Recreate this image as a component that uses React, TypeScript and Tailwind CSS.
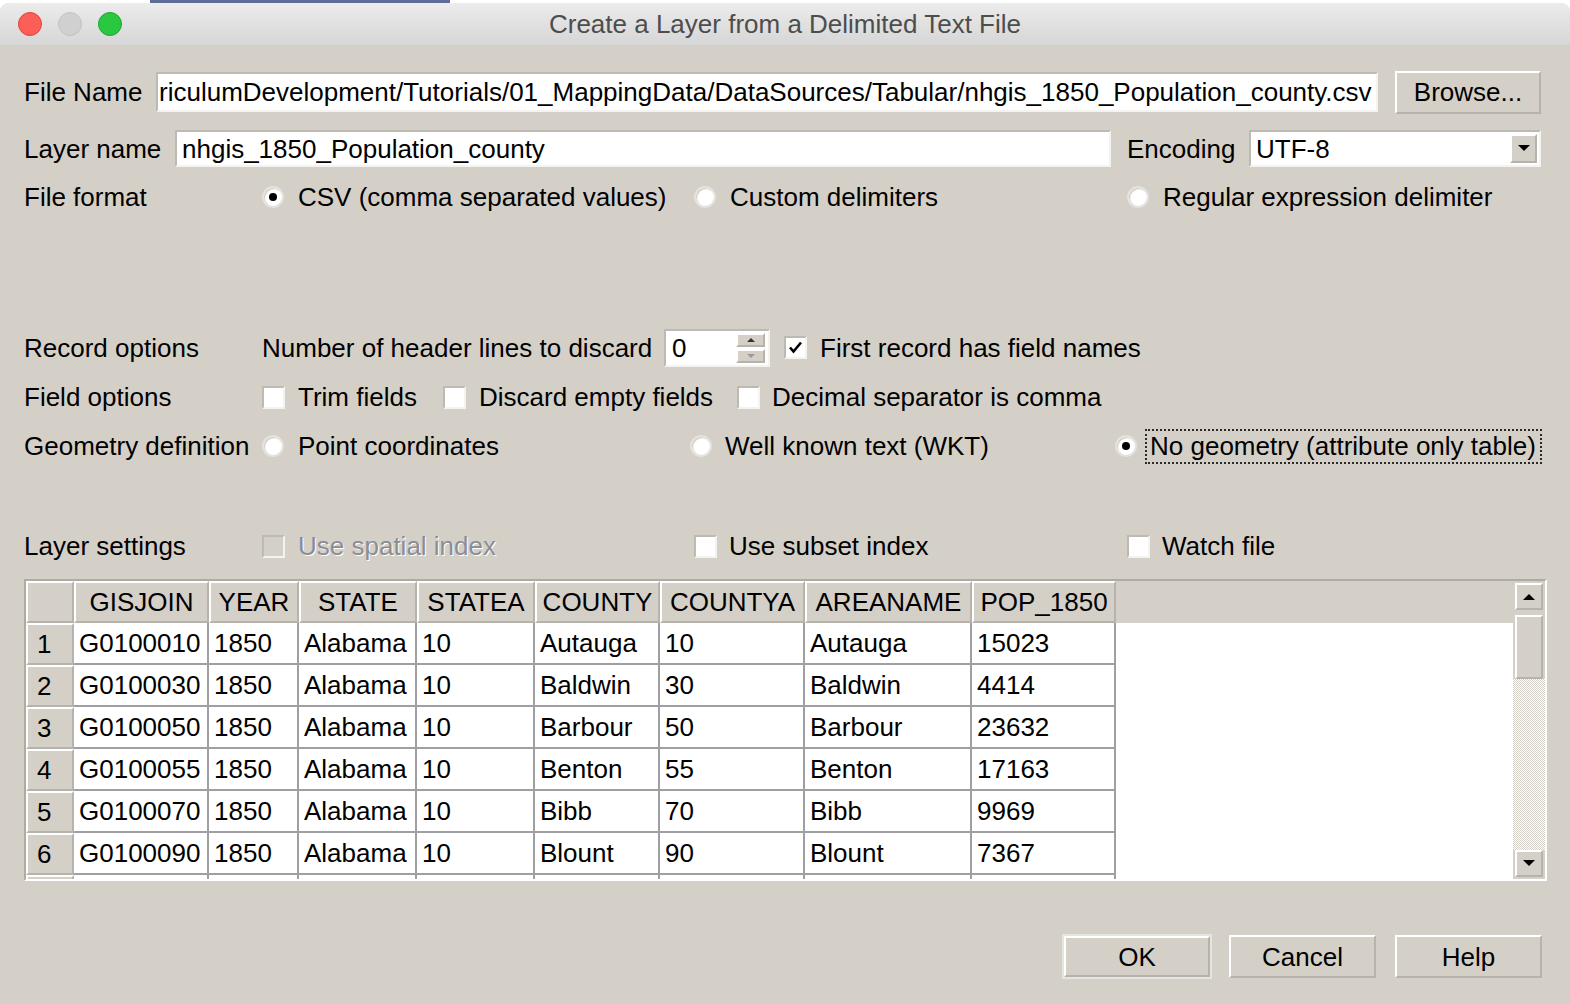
import React from 'react';

const sunken =
  'border-2 border-t-[#bdbab3] border-l-[#bdbab3] border-b-[#f4f3f0] border-r-[#f4f3f0]';
const raised =
  'border-2 border-t-white border-l-white border-b-[#b6b3ac] border-r-[#b6b3ac]';

const columns = [
  { name: 'GISJOIN', w: 'w-[135px]' },
  { name: 'YEAR', w: 'w-[90px]' },
  { name: 'STATE', w: 'w-[118px]' },
  { name: 'STATEA', w: 'w-[118px]' },
  { name: 'COUNTY', w: 'w-[125px]' },
  { name: 'COUNTYA', w: 'w-[145px]' },
  { name: 'AREANAME', w: 'w-[167px]' },
  { name: 'POP_1850', w: 'w-[144px]' },
];

const rows = [
  ['G0100010', '1850', 'Alabama', '10', 'Autauga', '10', 'Autauga', '15023'],
  ['G0100030', '1850', 'Alabama', '10', 'Baldwin', '30', 'Baldwin', '4414'],
  ['G0100050', '1850', 'Alabama', '10', 'Barbour', '50', 'Barbour', '23632'],
  ['G0100055', '1850', 'Alabama', '10', 'Benton', '55', 'Benton', '17163'],
  ['G0100070', '1850', 'Alabama', '10', 'Bibb', '70', 'Bibb', '9969'],
  ['G0100090', '1850', 'Alabama', '10', 'Blount', '90', 'Blount', '7367'],
];

function Radio({ checked = false }: { checked?: boolean }) {
  return (
    <div className="w-[22px] h-[22px] shrink-0 rounded-full bg-white border-2 border-[#e4e2de] shadow-[inset_1px_1px_1px_#c9c6c0] flex items-center justify-center">
      {checked && <div className="w-[8px] h-[8px] rounded-full bg-black" />}
    </div>
  );
}

function Check({ checked = false, disabled = false }: { checked?: boolean; disabled?: boolean }) {
  return (
    <div
      className={`w-[23px] h-[23px] shrink-0 flex items-center justify-center ${sunken} ${
        disabled ? 'bg-[#d4d0c8]' : 'bg-white'
      }`}
    >
      {checked && (
        <svg width="15" height="15" viewBox="0 0 15 15">
          <path d="M2 7.5 L5.5 11.5 L13 2.5" fill="none" stroke="#000" strokeWidth="2.6" />
        </svg>
      )}
    </div>
  );
}

function Button({ label, isDefault = false, w }: { label: string; isDefault?: boolean; w: string }) {
  const inner = (
    <div className={`h-full w-full flex items-center justify-center bg-[#d4d0c8] ${raised}`}>{label}</div>
  );
  if (isDefault) {
    return <div className={`${w} h-[45px] border-2 border-[#e6e4e0]`}>{inner}</div>;
  }
  return <div className={`${w} h-[43px]`}>{inner}</div>;
}

function Triangle({ up = false, color = '#000' }: { up?: boolean; color?: string }) {
  return (
    <svg width="12" height="7" viewBox="0 0 12 7">
      <path d={up ? 'M0 7 L6 1 L12 7 Z' : 'M0 0 L12 0 L6 6 Z'} fill={color} />
    </svg>
  );
}

function Label({ children, w }: { children: React.ReactNode; w: string }) {
  return <div className={`${w} shrink-0 whitespace-nowrap`}>{children}</div>;
}

function DataTable() {
  return (
    <div className="w-[1523px] h-[302px] flex border-2 border-t-[#aeaba4] border-l-[#aeaba4] border-b-white border-r-white bg-[#d4d0c8]">
      <div className="flex-1 flex flex-col overflow-hidden">
        {/* header */}
        <div className="flex h-[42px] shrink-0">
          <div className={`w-[48px] ${raised}`} />
          {columns.map((c) => (
            <div key={c.name} className={`${c.w} ${raised} flex items-center justify-center whitespace-nowrap`}>
              {c.name}
            </div>
          ))}
          <div className="flex-1" />
        </div>
        {/* body */}
        <div className="flex-1 flex flex-col overflow-hidden bg-white">
          {rows.map((r, i) => (
            <div key={i} className="flex h-[42px] shrink-0">
              <div className={`w-[48px] bg-[#d4d0c8] ${raised} flex items-center pl-[9px]`}>{i + 1}</div>
              {r.map((v, j) => (
                <div
                  key={j}
                  className={`${columns[j].w} border-r-2 border-b-2 border-[#a0a0a4] flex items-center pl-[5px] whitespace-nowrap`}
                >
                  {v}
                </div>
              ))}
              <div className="flex-1" />
            </div>
          ))}
          {/* next row, only its top edge shows */}
          <div className="flex h-[42px] shrink-0">
            <div className={`w-[48px] bg-[#d4d0c8] ${raised}`} />
            {columns.map((c) => (
              <div key={c.name} className={`${c.w} border-r-2 border-[#a0a0a4]`} />
            ))}
            <div className="flex-1" />
          </div>
        </div>
      </div>
      {/* scrollbar */}
      <div className="w-[32px] flex flex-col items-center py-[2px] bg-[#d4d0c8]">
        <div className={`w-[28px] h-[27px] shrink-0 flex items-center justify-center ${raised}`}>
          <Triangle up />
        </div>
        <div className={`w-[28px] h-[64px] mt-[5px] shrink-0 ${raised}`} />
        <div className="w-full flex-1 bg-[repeating-conic-gradient(#ffffff_0%_25%,#d4d0c8_0%_50%)] bg-[length:2px_2px]" />
        <div className={`w-[28px] h-[27px] shrink-0 flex items-center justify-center ${raised}`}>
          <Triangle />
        </div>
      </div>
    </div>
  );
}

export default function App() {
  return (
    <div className="w-[1570px] h-[1004px] overflow-hidden bg-white font-['Liberation_Sans',Arial,sans-serif] text-[26px] leading-none text-black">
      {/* window behind */}
      <div className="h-[3px] flex">
        <div className="ml-[150px] w-[300px] bg-[#5d6c98]" />
      </div>

      <div className="h-[1001px] flex flex-col bg-[#d4d0c8] rounded-t-[9px] overflow-hidden">
        {/* Title bar */}
        <div className="h-[43px] shrink-0 grid grid-cols-[1fr_auto_1fr] items-center bg-gradient-to-b from-[#ececec] to-[#d6d6d6] border-b border-[#cfcfcf]">
          <div className="flex items-center gap-[16px] pl-[18px]">
            <div className="w-[24px] h-[24px] rounded-full bg-[#fc5f57] border border-[#e0443e]" />
            <div className="w-[24px] h-[24px] rounded-full bg-[#d0d0d0] border border-[#c2c2c2]" />
            <div className="w-[24px] h-[24px] rounded-full bg-[#2ac740] border border-[#1ea631]" />
          </div>
          <div className="text-[#4d4d4d] whitespace-nowrap">Create a Layer from a Delimited Text File</div>
          <div />
        </div>

        <div className="flex flex-col px-[24px] pt-[24px]">
          {/* File name */}
          <div className="h-[44px] flex items-center">
            <Label w="w-[132px]">File Name</Label>
            <div className={`w-[1222px] h-[40px] bg-white ${sunken} flex items-center overflow-hidden pl-[1px]`}>
              <span className="whitespace-nowrap">
                riculumDevelopment/Tutorials/01_MappingData/DataSources/Tabular/nhgis_1850_Population_county.csv
              </span>
            </div>
            <div className="ml-[17px]">
              <Button label="Browse..." w="w-[146px]" />
            </div>
          </div>

          {/* Layer name */}
          <div className="mt-[15px] h-[39px] flex items-center">
            <Label w="w-[151px]">Layer name</Label>
            <div className={`w-[936px] h-[37px] bg-white ${sunken} flex items-center pl-[5px]`}>
              nhgis_1850_Population_county
            </div>
            <Label w="w-[122px] ml-[16px]">Encoding</Label>
            <div className={`w-[292px] h-[37px] bg-white ${sunken} flex items-center pl-[5px] pr-[2px]`}>
              <span className="flex-1">UTF-8</span>
              <div className={`w-[27px] h-[29px] bg-[#d4d0c8] ${raised} flex items-center justify-center`}>
                <Triangle />
              </div>
            </div>
          </div>

          {/* File format */}
          <div className="mt-[14px] h-[30px] flex items-center">
            <Label w="w-[238px]">File format</Label>
            <div className="w-[432px] flex items-center gap-[14px]">
              <Radio checked />
              <span>CSV (comma separated values)</span>
            </div>
            <div className="w-[433px] flex items-center gap-[14px]">
              <Radio />
              <span>Custom delimiters</span>
            </div>
            <div className="flex items-center gap-[14px]">
              <Radio />
              <span>Regular expression delimiter</span>
            </div>
          </div>

          {/* Record options */}
          <div className="mt-[117px] h-[37px] flex items-center">
            <Label w="w-[238px]">Record options</Label>
            <Label w="w-[402px]">Number of header lines to discard</Label>
            <div className={`w-[106px] h-[38px] bg-white ${sunken} flex items-center pl-[6px] pr-[3px]`}>
              <span className="flex-1">0</span>
              <div className="flex flex-col gap-[2px]">
                <div className={`w-[29px] h-[14px] bg-[#d4d0c8] ${raised} flex items-center justify-center`}>
                  <svg width="8" height="4" viewBox="0 0 8 4">
                    <path d="M0 4 L4 0 L8 4 Z" fill="#333" />
                  </svg>
                </div>
                <div className={`w-[29px] h-[14px] bg-[#d4d0c8] ${raised} flex items-center justify-center`}>
                  <svg width="8" height="4" viewBox="0 0 8 4">
                    <path d="M0 0 L8 0 L4 4 Z" fill="#9a9a9a" />
                  </svg>
                </div>
              </div>
            </div>
            <div className="ml-[14px] flex items-center gap-[13px]">
              <Check checked />
              <span>First record has field names</span>
            </div>
          </div>

          {/* Field options */}
          <div className="mt-[16px] h-[30px] flex items-center">
            <Label w="w-[238px]">Field options</Label>
            <div className="w-[181px] flex items-center gap-[13px]">
              <Check />
              <span>Trim fields</span>
            </div>
            <div className="w-[294px] flex items-center gap-[13px]">
              <Check />
              <span>Discard empty fields</span>
            </div>
            <div className="flex items-center gap-[12px]">
              <Check />
              <span>Decimal separator is comma</span>
            </div>
          </div>

          {/* Geometry definition */}
          <div className="mt-[16px] h-[36px] flex items-center">
            <Label w="w-[238px]">Geometry definition</Label>
            <div className="w-[428px] flex items-center gap-[14px]">
              <Radio />
              <span>Point coordinates</span>
            </div>
            <div className="w-[425px] flex items-center gap-[13px]">
              <Radio />
              <span>Well known text (WKT)</span>
            </div>
            <div className="flex items-center">
              <Radio checked />
              <div className="ml-[8px] w-[397px] h-[35px] border-2 border-dotted border-[#2a2a2a] flex items-center pl-[3px] whitespace-nowrap">
                No geometry (attribute only table)
              </div>
            </div>
          </div>

          {/* Layer settings */}
          <div className="mt-[67px] h-[30px] flex items-center">
            <Label w="w-[238px]">Layer settings</Label>
            <div className="w-[432px] flex items-center gap-[13px]">
              <Check disabled />
              <span className="text-[#8a8d96] [text-shadow:1px_1px_0_#ffffff]">Use spatial index</span>
            </div>
            <div className="w-[433px] flex items-center gap-[12px]">
              <Check />
              <span>Use subset index</span>
            </div>
            <div className="flex items-center gap-[12px]">
              <Check />
              <span>Watch file</span>
            </div>
          </div>

          {/* Preview table */}
          <div className="mt-[18px]">
            <DataTable />
          </div>

          {/* Dialog buttons */}
          <div className="mt-[53px] flex justify-end items-center gap-[17px] pr-[4px]">
            <Button label="OK" isDefault w="w-[150px]" />
            <Button label="Cancel" w="w-[147px]" />
            <div className="ml-[2px]">
              <Button label="Help" w="w-[147px]" />
            </div>
          </div>
        </div>
      </div>
    </div>
  );
}
